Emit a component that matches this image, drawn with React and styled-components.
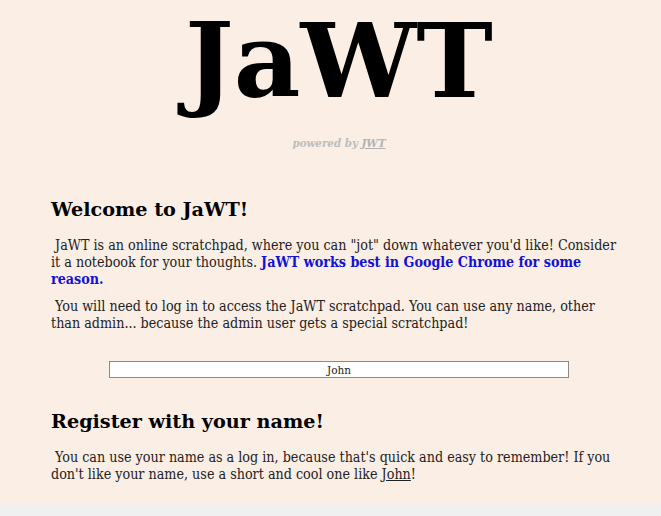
import React from 'react';
import styled, { createGlobalStyle } from 'styled-components';

const GlobalStyle = createGlobalStyle`
	html, body {
		margin: 0;
		background: #f0f0f0;
	}
	body {
		font-family: 'DejaVu Serif', serif;
		color: #111;
	}
`;

const Page = styled.div`
	background: #faeee5;
	height: 504px;
	overflow: hidden;
`;

const Main = styled.main`
	width: 576px;
	margin-left: 51px;
`;

const Title = styled.h1`
	margin: 0;
	padding-top: 4px;
	font-size: 103px;
	line-height: 113px;
	font-weight: bold;
	text-align: center;
	color: #000;
`;

const Powered = styled.p`
	margin: 20px 0 0;
	font-size: 10.3px;
	line-height: 13px;
	font-weight: bold;
	font-style: italic;
	text-align: center;
	color: #bdbdbd;

	a {
		color: #b3b3b3;
		text-decoration: underline;
	}
`;

const Heading = styled.h2`
	margin: ${({ $top }) => $top} 0 0;
	font-size: 19.2px;
	line-height: 22px;
	font-weight: bold;
	color: #000;
`;

const Text = styled.p`
	margin: ${({ $first }) => ($first ? '16px' : '10px')} 0 0;
	font-family: 'DejaVu Serif Condensed', 'DejaVu Serif', serif;
	font-stretch: condensed;
	font-size: 14.2px;
	line-height: 17px;
	color: #222;
`;

const Highlight = styled.strong`
	color: #1212d4;
`;

const NameLink = styled.a`
	color: #222;
	text-decoration: underline;
`;

const InputRow = styled.div`
	display: flex;
	justify-content: center;
	margin-top: 29px;
`;

const NameInput = styled.input`
	width: 80%;
	height: 17px;
	box-sizing: border-box;
	padding: 0;
	border: 1px solid #8a8a8a;
	background: #fff;
	font-family: 'DejaVu Serif', serif;
	font-size: 10.5px;
	text-align: center;
	color: #222;
	outline: none;
`;

const App = () => (
	<Page>
		<GlobalStyle />
		<Main>
			<Title>JaWT</Title>
			<Powered>
				powered by <a href='#'>JWT</a>
			</Powered>

			<Heading $top='49px'>Welcome to JaWT!</Heading>
			<Text $first>
				&nbsp;JaWT is an online scratchpad, where you can "jot" down whatever
				you'd like! Consider it a notebook for your thoughts.{' '}
				<Highlight>JaWT works best in Google Chrome for some reason.</Highlight>
			</Text>
			<Text>
				&nbsp;You will need to log in to access the JaWT scratchpad. You can use
				any name, other than admin... because the admin user gets a special
				scratchpad!
			</Text>

			<InputRow>
				<NameInput defaultValue='John' />
			</InputRow>

			<Heading $top='33px'>Register with your name!</Heading>
			<Text $first>
				&nbsp;You can use your name as a log in, because that's quick and easy
				to remember! If you don't like your name, use a short and cool one like{' '}
				<NameLink href='#'>John</NameLink>!
			</Text>
		</Main>
	</Page>
);

export default App;
